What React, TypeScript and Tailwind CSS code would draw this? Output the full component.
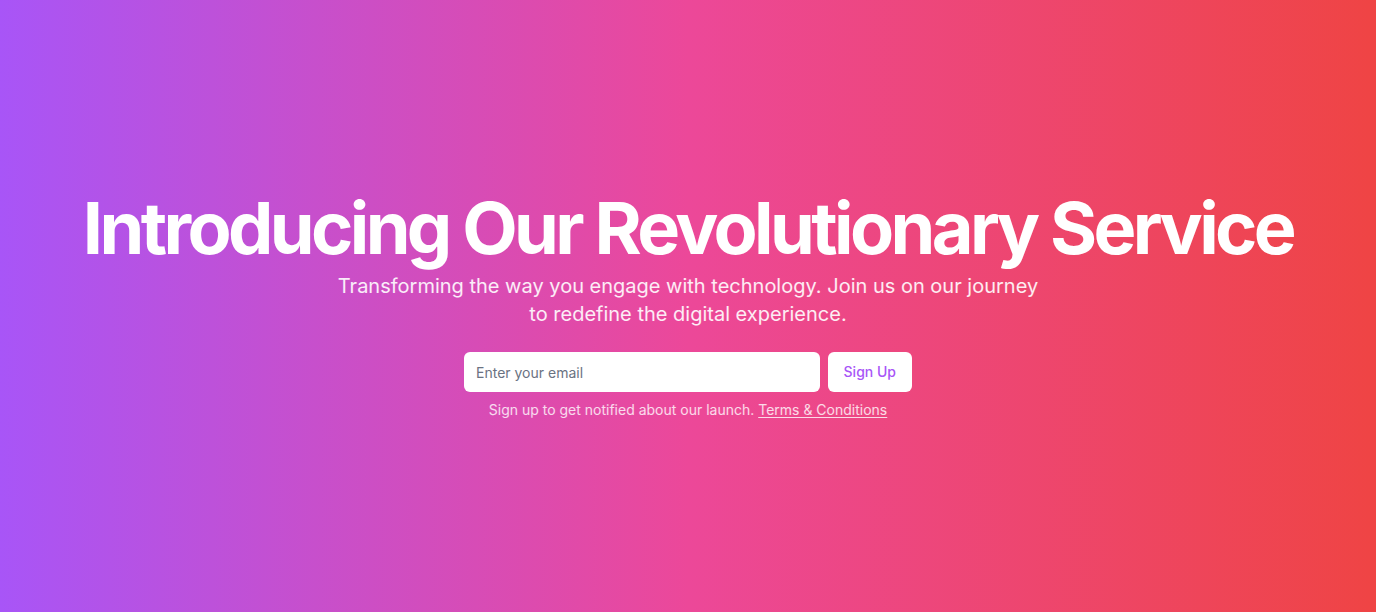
import React from 'react';

const App: React.FC = () => {
  return (
    <section
      className="w-full min-h-screen flex items-center justify-center bg-[linear-gradient(to_right,#a855f7,#ec4899,#ef4444)]"
      style={{ fontFamily: 'Inter, "Noto Sans", sans-serif' }}
    >
      <div className="container mx-auto px-4 flex flex-col items-center text-center">
        <div className="space-y-2">
          <h1 className="text-7xl leading-none font-bold tracking-tighter text-white">
            Introducing Our Revolutionary Service
          </h1>
          <p className="mx-auto max-w-[720px] text-xl text-white/90">
            Transforming the way you engage with technology. Join us on our journey to redefine the digital experience.
          </p>
        </div>

        <div className="w-full max-w-md mt-6 space-y-2">
          <form className="flex gap-2" onSubmit={(e) => e.preventDefault()}>
            <input
              type="email"
              placeholder="Enter your email"
              className="flex-1 h-10 rounded-md bg-white px-3 text-sm text-gray-900 placeholder:text-gray-500 outline-none"
            />
            <button type="submit" className="h-10 rounded-md bg-white px-4 text-sm font-medium text-[#a855f7]">
              Sign Up
            </button>
          </form>
          <p className="text-sm text-white/80">
            Sign up to get notified about our launch.{' '}
            <a href="#" className="underline underline-offset-2">
              Terms &amp; Conditions
            </a>
          </p>
        </div>
      </div>
    </section>
  );
};

export default App;
